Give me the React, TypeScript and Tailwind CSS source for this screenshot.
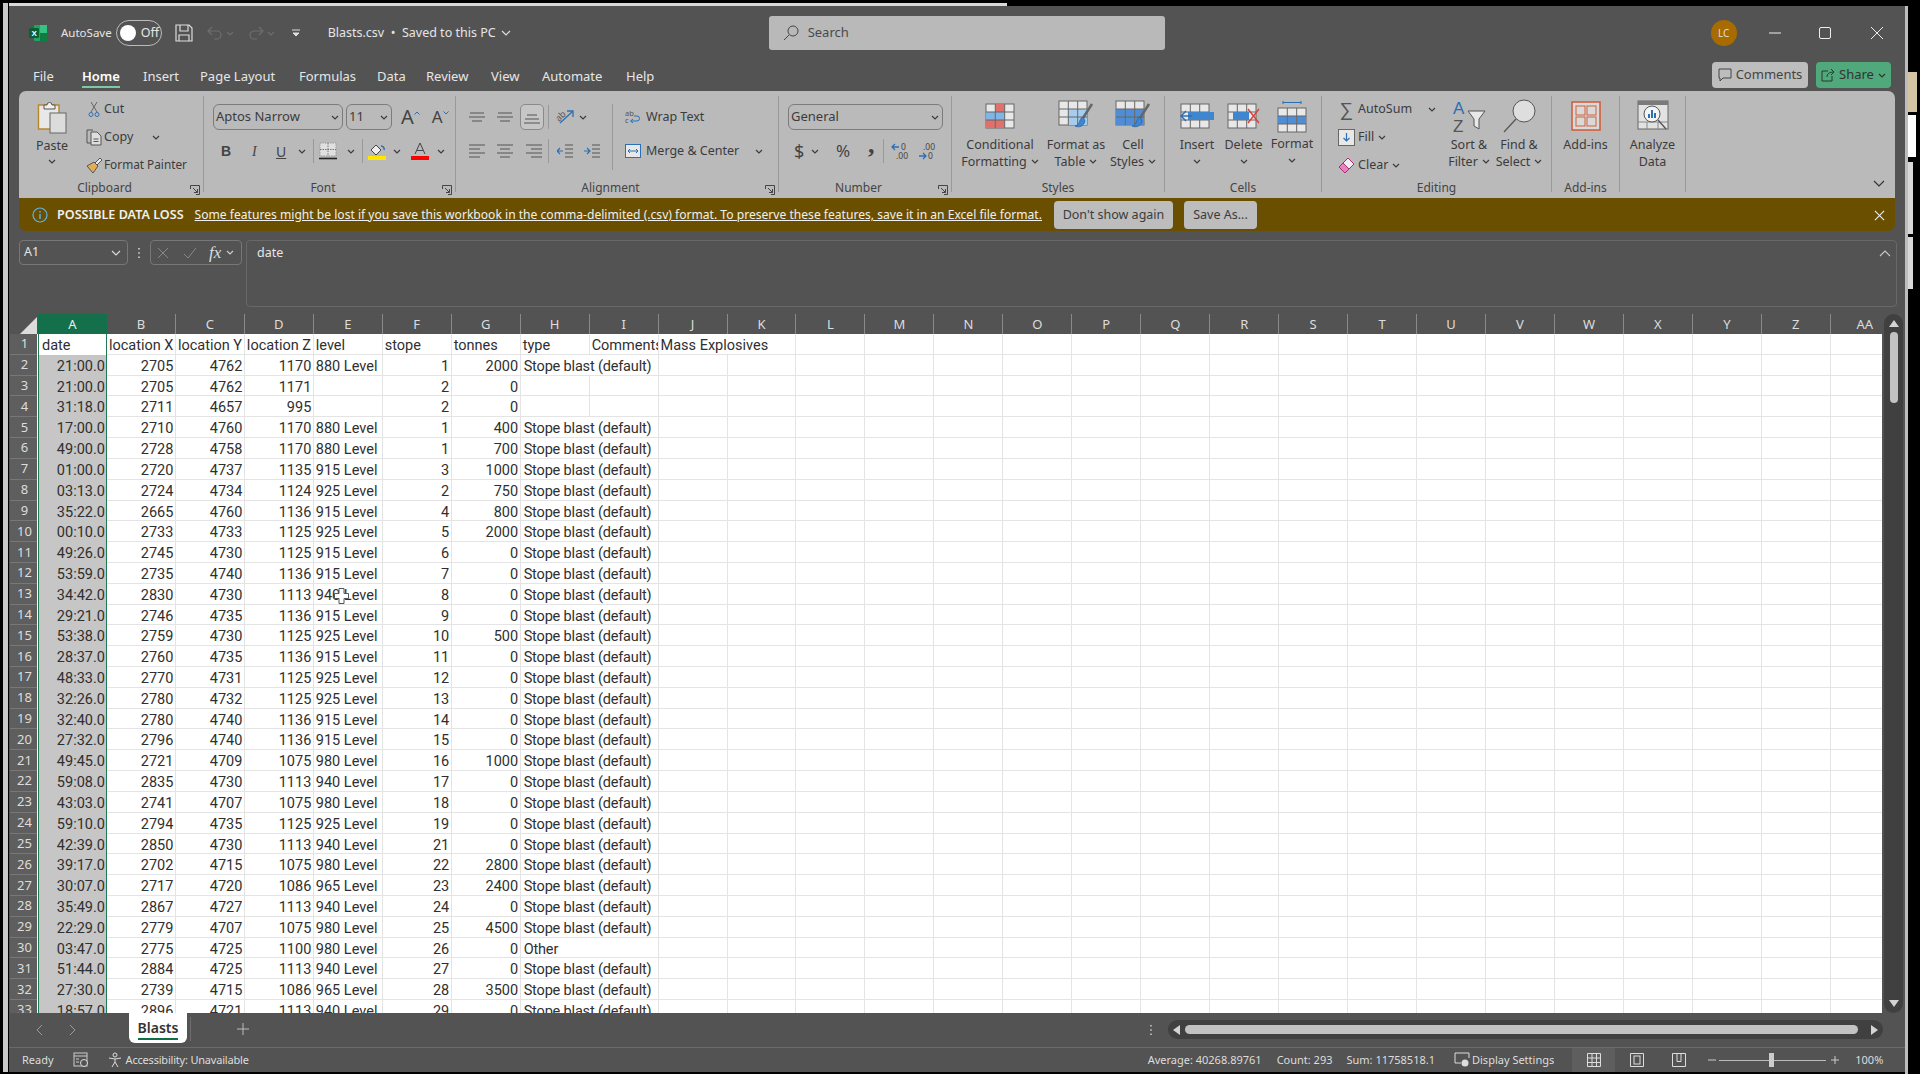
import React from 'react';

const rows: (string | number)[][] = [
  ['21:00.0', 2705, 4762, 1170, '880 Level', 1, 2000, 'Stope blast (default)'],
  ['21:00.0', 2705, 4762, 1171, '', 2, 0, ''],
  ['31:18.0', 2711, 4657, 995, '', 2, 0, ''],
  ['17:00.0', 2710, 4760, 1170, '880 Level', 1, 400, 'Stope blast (default)'],
  ['49:00.0', 2728, 4758, 1170, '880 Level', 1, 700, 'Stope blast (default)'],
  ['01:00.0', 2720, 4737, 1135, '915 Level', 3, 1000, 'Stope blast (default)'],
  ['03:13.0', 2724, 4734, 1124, '925 Level', 2, 750, 'Stope blast (default)'],
  ['35:22.0', 2665, 4760, 1136, '915 Level', 4, 800, 'Stope blast (default)'],
  ['00:10.0', 2733, 4733, 1125, '925 Level', 5, 2000, 'Stope blast (default)'],
  ['49:26.0', 2745, 4730, 1125, '915 Level', 6, 0, 'Stope blast (default)'],
  ['53:59.0', 2735, 4740, 1136, '915 Level', 7, 0, 'Stope blast (default)'],
  ['34:42.0', 2830, 4730, 1113, '940 Level', 8, 0, 'Stope blast (default)'],
  ['29:21.0', 2746, 4735, 1136, '915 Level', 9, 0, 'Stope blast (default)'],
  ['53:38.0', 2759, 4730, 1125, '925 Level', 10, 500, 'Stope blast (default)'],
  ['28:37.0', 2760, 4735, 1136, '915 Level', 11, 0, 'Stope blast (default)'],
  ['48:33.0', 2770, 4731, 1125, '925 Level', 12, 0, 'Stope blast (default)'],
  ['32:26.0', 2780, 4732, 1125, '925 Level', 13, 0, 'Stope blast (default)'],
  ['32:40.0', 2780, 4740, 1136, '915 Level', 14, 0, 'Stope blast (default)'],
  ['27:32.0', 2796, 4740, 1136, '915 Level', 15, 0, 'Stope blast (default)'],
  ['49:45.0', 2721, 4709, 1075, '980 Level', 16, 1000, 'Stope blast (default)'],
  ['59:08.0', 2835, 4730, 1113, '940 Level', 17, 0, 'Stope blast (default)'],
  ['43:03.0', 2741, 4707, 1075, '980 Level', 18, 0, 'Stope blast (default)'],
  ['59:10.0', 2794, 4735, 1125, '925 Level', 19, 0, 'Stope blast (default)'],
  ['42:39.0', 2850, 4730, 1113, '940 Level', 21, 0, 'Stope blast (default)'],
  ['39:17.0', 2702, 4715, 1075, '980 Level', 22, 2800, 'Stope blast (default)'],
  ['30:07.0', 2717, 4720, 1086, '965 Level', 23, 2400, 'Stope blast (default)'],
  ['35:49.0', 2867, 4727, 1113, '940 Level', 24, 0, 'Stope blast (default)'],
  ['22:29.0', 2779, 4707, 1075, '980 Level', 25, 4500, 'Stope blast (default)'],
  ['03:47.0', 2775, 4725, 1100, '980 Level', 26, 0, 'Other'],
  ['51:44.0', 2884, 4725, 1113, '940 Level', 27, 0, 'Stope blast (default)'],
  ['27:30.0', 2739, 4715, 1086, '965 Level', 28, 3500, 'Stope blast (default)'],
  ['18:57.0', 2896, 4721, 1113, '940 Level', 29, 0, 'Stope blast (default)'],
];

const headers = ['date', 'location X', 'location Y', 'location Z', 'level', 'stope', 'tonnes', 'type', 'Comments', 'Mass Explosives'];
const cols = 'ABCDEFGHIJKLMNOPQRSTUVWXYZ'.split('').concat('AA');

const tabs: [string, string][] = [
  ['File', 'w-[49px]'], ['Home', 'w-[61px]'], ['Insert', 'w-[57px]'], ['Page Layout', 'w-[99px]'], ['Formulas', 'w-[78px]'],
  ['Data', 'w-[49px]'], ['Review', 'w-[65px]'], ['View', 'w-[51px]'], ['Automate', 'w-[84px]'], ['Help', 'w-[40px]'],
];

const Chev = ({ color = '#3c3c3c' }: { color?: string }) => (
  <svg viewBox="0 0 8 5" className="w-2 h-[5px] shrink-0">
    <path d="M1 1l3 3 3-3" fill="none" stroke={color} strokeWidth="1.2" />
  </svg>
);

const Launcher = () => (
  <svg viewBox="0 0 10 10" className="w-[10px] h-[10px] shrink-0">
    <path d="M.5 4V.5H9.500V9.500H6M3 3l4.500 4.500M7.500 4v3.500H4" fill="none" stroke="#444" strokeWidth="1" />
  </svg>
);

// ribbon group: content on top, caption at the bottom, thin divider to the right
const Group = ({ w, label, launcher, children }: { w: string; label: string; launcher?: boolean; children: React.ReactNode }) => (
  <>
    <div className={`${w} h-full flex flex-col shrink-0`}>
      <div className="flex-1 min-h-0 flex flex-col">{children}</div>
      <div className="h-[20px] flex items-center text-[12px] text-[#444]">
        <span className="flex-1 text-center">{label}</span>
        {launcher && <span className="mr-[3px] -mb-1"><Launcher /></span>}
      </div>
    </div>
    <div className="w-px h-[96px] mt-[5px] bg-[#999] shrink-0" />
  </>
);

const Big = ({ w, icon, lines, chev = 'below', shift = '' }: { w: string; icon: React.ReactNode; lines: string[]; chev?: 'below' | 'inline' | 'none'; shift?: string }) => (
  <div className={`${w} shrink-0 flex flex-col items-center pt-[9px] text-[12.500px] leading-[17px] text-[#3c3c3c]`}>
    <div className="h-[32px] flex items-center justify-center mb-[4px]">{icon}</div>
    <div className={shift}>
      {lines.map((l, i) => (
        <div key={l} className="flex items-center justify-center gap-[4px] whitespace-nowrap">
          {l}
          {chev === 'inline' && i === lines.length - 1 && <Chev />}
        </div>
      ))}
    </div>
    {chev === 'below' && <div className="mt-[6px]"><Chev /></div>}
  </div>
);

const Sel = ({ w, text, size = 'text-[13px]' }: { w: string; text: string; size?: string }) => (
  <div className={`${w} h-[26px] rounded-[6px] border border-[#7c7c7c] flex items-center justify-between pl-[2px] pr-[3px] ${size} text-[#3c3c3c]`}>
    {text}
    <Chev />
  </div>
);

const Lines = ({ kind }: { kind: 'top' | 'mid' | 'bot' | 'left' | 'center' | 'right' }) => {
  const d = {
    top: 'M0 1h16M1 5h14M3 9h10',
    mid: 'M1 3h14M0 7h16M3 11h10',
    bot: 'M3 5h10M1 9h14M0 13h16',
    left: 'M0 1h16M0 5h11M0 9h16M0 13h11',
    center: 'M0 1h16M3 5h10M0 9h16M3 13h10',
    right: 'M0 1h16M5 5h11M0 9h16M5 13h11',
  }[kind];
  return (
    <svg viewBox="0 0 16 14" className="w-4 h-[14px] shrink-0">
      <path d={d} stroke="#555" strokeWidth="1.100" fill="none" />
    </svg>
  );
};

const CellGrid = ({ fills }: { fills?: [number, number, string][] }) => (
  <>
    <rect x="1" y="1" width="28" height="24" fill="#e8e8e8" stroke="#666" />
    {(fills || []).map(([c, r, f]) => (
      <rect key={`${c}${r}`} x={1 + c * 9.330} y={1 + r * 8} width="9.330" height="8" fill={f} />
    ))}
    <path d="M10.300 1v24M19.700 1v24M1 9h28M1 17h28" stroke="#666" />
  </>
);

const Brush = () => (
  <g>
    <path d="M34 4L25 18" stroke="#666" strokeWidth="2.500" />
    <path d="M25 17c-3 1-3 4-4 6-1 2-3 3-4 3 4 2 9 0 10-5z" fill="#3f86cf" stroke="#255c94" strokeWidth=".7" />
  </g>
);

const Small = ({ icon, text, chev, size = 'text-[12.500px]', iconW = 'w-[21px]' }: { icon: React.ReactNode; text: string; chev?: boolean; size?: string; iconW?: string }) => (
  <div className={`h-[28px] flex items-center ${size} text-[#3c3c3c] whitespace-nowrap`}>
    <span className={`${iconW} flex justify-center shrink-0`}>{icon}</span>
    <span className="ml-[1px]">{text}</span>
    {chev && <span className="ml-[4px]"><Chev /></span>}
  </div>
);

// font size grow / shrink buttons: a letter with a small blue caret
const SizeBtn = ({ big }: { big?: boolean }) => (
  <span className={big ? 'ml-[6px] flex items-start text-[20px] leading-[26px] text-[#444]' : 'ml-[9px] flex items-start text-[17px] leading-[26px] text-[#444]'}>
    A
    <svg viewBox="0 0 6 4" className="w-[6px] h-1 mt-[7px]"><path d={big ? 'M.5 3.500L3 1l2.500 2.500' : 'M.5.500L3 3 5.500.5'} stroke="#2b6fb5" fill="none" /></svg>
  </span>
);

const Ribbon = () => (
  <div className="mx-[10px] w-[1876px] h-[107px] bg-[#bababa] rounded-t-[7px] flex">
    <Group w="w-[184px]" label="Clipboard" launcher>
      <div className="flex">
        <div className="w-[66px] flex flex-col items-center pt-[9px] text-[12.500px] text-[#3c3c3c]">
          <svg viewBox="0 0 30 34" className="w-[30px] h-[34px]">
            <path d="M1.500 5H22v24H1.500z" fill="#e8e8e8" stroke="#b8862a" strokeWidth="1.400" />
            <path d="M7 5h3a2.500 2.500 0 015 0h3v4H7z" fill="#f0f0f0" stroke="#555" />
            <rect x="13" y="13" width="16" height="20" fill="#dcdcdc" stroke="#666" />
          </svg>
          <span className="leading-[17px] mt-[3px]">Paste</span>
          <span className="mt-[5px]"><Chev /></span>
        </div>
        <div className="flex flex-col pt-[4px]">
          <Small text="Cut" iconW="w-[18px]" icon={
            <svg viewBox="0 0 12 17" className="w-3 h-[17px]"><path d="M3 11L9 1M9 11L3 1" stroke="#666" fill="none" /><circle cx="3" cy="13.500" r="2" fill="none" stroke="#2b6fb5" /><circle cx="9" cy="13.500" r="2" fill="none" stroke="#2b6fb5" /></svg>
          } />
          <div className="flex items-center">
            <Small text="Copy" iconW="w-[18px]" icon={
              <svg viewBox="0 0 16 17" className="w-4 h-[17px]"><path d="M5 14H1V1h6" fill="none" stroke="#555" /><path d="M5 3h6l4 4v9H5z" fill="#dedede" stroke="#555" /><path d="M7.500 10h5M7.500 12.500h5" stroke="#555" /></svg>
            } />
            <span className="ml-[19px]"><Chev /></span>
          </div>
          <Small text="Format Painter" size="text-[11.800px]" iconW="w-[18px]" icon={
            <svg viewBox="0 0 18 17" className="w-[18px] h-[17px]"><path d="M10 6l5-5 2 2-5 5z" fill="#e8e8e8" stroke="#555" /><path d="M2 9l7-4 4 4-5 7z" fill="#e2ad55" stroke="#555" /></svg>
          } />
        </div>
      </div>
    </Group>

    <Group w="w-[251px]" label="Font" launcher>
      <div className="flex items-center pt-[13px] pl-[9px] gap-[3px]">
        <Sel w="w-[130px]" text="Aptos Narrow" />
        <Sel w="w-[46px]" text="11" />
        <SizeBtn big />
        <SizeBtn />
      </div>
      <div className="flex items-center h-[30px] mt-[6px] text-[14px] text-[#444]">
        <span className="ml-[17px] w-[11px] font-bold font-['Liberation_Sans',sans-serif]">B</span>
        <span className="ml-[20px] w-[9px] italic font-['Liberation_Serif',serif]">I</span>
        <span className="ml-[15px] w-[13px] underline">U</span>
        <span className="ml-[9px]"><Chev /></span>
        <span className="ml-[7px] w-px h-[24px] bg-[#999]" />
        <svg viewBox="0 0 18 18" className="ml-[5px] w-[18px] h-[18px]"><path d="M1 1h16v13H1z" fill="#e0e0e0" stroke="#999" strokeDasharray="1.500 1" /><path d="M9 1v13M1 7.500h16" stroke="#777" strokeDasharray="1.500 1" /><path d="M0 16.500h18" stroke="#222" strokeWidth="1.600" /></svg>
        <span className="ml-[10px]"><Chev /></span>
        <span className="ml-[7px] w-px h-[24px] bg-[#999]" />
        <svg viewBox="0 0 18 18" className="ml-[5px] w-[18px] h-[18px]"><path d="M3 8l5-5 5 5-5 5z" fill="#eee" stroke="#444" /><path d="M13 4a3 3 0 013 4" stroke="#2b6fb5" fill="none" strokeWidth="1.500" /><rect y="14" width="18" height="4" fill="#ffe600" /></svg>
        <span className="ml-[7px]"><Chev /></span>
        <svg viewBox="0 0 18 18" className="ml-[10px] w-[18px] h-[18px]"><path d="M4 12L9 1l5 11M6 8.500h6" stroke="#444" fill="none" /><rect y="14" width="18" height="4" fill="#ff0000" /></svg>
        <span className="ml-[8px]"><Chev /></span>
      </div>
    </Group>

    <Group w="w-[322px]" label="Alignment" launcher>
      <div className="flex">
        <div className="w-[156px] pl-[13px] pt-[13px]">
          <div className="flex items-center h-[26px]">
            <Lines kind="mid" />
            <span className="ml-[12px]"><Lines kind="mid" /></span>
            <span className="ml-[7px] w-[24px] h-[26px] rounded-[5px] border border-[#8a8a8a] bg-[#c6c6c6] flex items-center justify-center"><Lines kind="bot" /></span>
            <span className="ml-[4px] w-px h-[24px] bg-[#999]" />
            <svg viewBox="0 0 20 18" className="ml-[6px] w-5 h-[18px]"><text x="1" y="11" fontSize="9" fill="#555" fontFamily="Noto Sans" transform="rotate(-45 6 9)">ab</text><path d="M5 15L17 4M12 3h6v6" stroke="#2b6fb5" fill="none" strokeWidth="1.300" /></svg>
            <span className="ml-[4px]"><Chev /></span>
          </div>
          <div className="flex items-center h-[30px] mt-[6px]">
            <Lines kind="left" />
            <span className="ml-[12px]"><Lines kind="center" /></span>
            <span className="ml-[13px]"><Lines kind="right" /></span>
            <span className="ml-[6px] w-px h-[24px] bg-[#999]" />
            <svg viewBox="0 0 16 14" className="ml-[8px] w-4 h-[14px]"><path d="M8 1h8M8 5h8M8 9h8M8 13h8" stroke="#555" /><path d="M6 7H0M3 4L0 7l3 3" stroke="#2b6fb5" fill="none" strokeWidth="1.200" /></svg>
            <svg viewBox="0 0 16 14" className="ml-[11px] w-4 h-[14px]"><path d="M8 1h8M8 5h8M8 9h8M8 13h8" stroke="#555" /><path d="M0 7h6M3 4l3 3-3 3" stroke="#2b6fb5" fill="none" strokeWidth="1.200" /></svg>
          </div>
        </div>
        <div className="w-px h-[66px] mt-[13px] bg-[#999]" />
        <div className="flex flex-col pl-[12px] pt-[12px] text-[12.500px] text-[#3c3c3c] whitespace-nowrap">
          <div className="flex items-center h-[28px] gap-[5px]">
            <svg viewBox="0 0 16 14" className="w-4 h-[14px]"><text x="0" y="6" fontSize="7.500" fill="#555" fontFamily="Noto Sans">ab</text><text x="0" y="13" fontSize="7.500" fill="#555" fontFamily="Noto Sans">c</text><path d="M9 6h3a2.500 2.500 0 010 5H6M8 9l-2.500 2L8 13" stroke="#2b6fb5" fill="none" /></svg>
            Wrap Text
          </div>
          <div className="flex items-center h-[28px] mt-[6px] gap-[5px]">
            <svg viewBox="0 0 16 14" className="w-4 h-[14px]"><rect x=".5" y=".5" width="15" height="13" fill="#e8e8e8" stroke="#2b6fb5" /><path d="M3 7h10M5 5L3 7l2 2M11 5l2 2-2 2" stroke="#2b6fb5" fill="none" /></svg>
            Merge &amp; Center
            <span className="ml-[11px]"><Chev /></span>
          </div>
        </div>
      </div>
    </Group>

    <Group w="w-[172px]" label="Number" launcher>
      <div className="pl-[9px] pt-[13px]"><Sel w="w-[155px]" text="General" /></div>
      <div className="flex items-center h-[30px] mt-[6px] text-[#444]">
        <span className="ml-[15px] w-[10px] text-[18px]">$</span>
        <span className="ml-[7px]"><Chev /></span>
        <span className="ml-[17px] w-[18px] text-[17px]">%</span>
        <span className="ml-[14px] w-[8px] -mt-[12px] text-[26px] font-bold leading-[18px] font-['Liberation_Serif',serif]">,</span>
        <span className="ml-[7px] w-px h-[24px] bg-[#999]" />
        <svg viewBox="0 0 18 18" className="ml-[7px] w-[18px] h-[18px]"><path d="M8 5H1M4 2L1 5l3 3" stroke="#2b6fb5" fill="none" strokeWidth="1.300" /><text x="10" y="8" fontSize="8.500" fill="#444" fontFamily="Noto Sans">0</text><text x="5" y="17" fontSize="8.500" fill="#444" fontFamily="Noto Sans">.00</text></svg>
        <svg viewBox="0 0 18 18" className="ml-[9px] w-[18px] h-[18px]"><text x="5" y="8" fontSize="8.500" fill="#444" fontFamily="Noto Sans">.00</text><path d="M1 14h7M5 11l3 3-3 3" stroke="#2b6fb5" fill="none" strokeWidth="1.300" /><text x="10" y="17" fontSize="8.500" fill="#444" fontFamily="Noto Sans">0</text></svg>
      </div>
    </Group>

    <Group w="w-[212px]" label="Styles">
      <div className="flex pl-[2px]">
        <Big w="w-[92px]" lines={['Conditional', 'Formatting']} chev="inline" icon={
          <svg viewBox="0 0 30 26" className="w-[30px] h-[26px]"><CellGrid fills={[[1, 0, '#e0706b'], [0, 1, '#7fb6e6'], [1, 1, '#7fb6e6'], [1, 2, '#e0706b'], [0, 2, '#e0706b']]} /></svg>
        } />
        <Big w="w-[60px]" lines={['Format as', 'Table']} chev="inline" icon={
          <svg viewBox="0 0 36 32" className="w-[36px] h-[32px]"><CellGrid fills={[[1, 1, '#a6cdee'], [2, 1, '#a6cdee'], [1, 2, '#a6cdee'], [2, 2, '#a6cdee']]} /><Brush /></svg>
        } />
        <Big w="w-[54px]" lines={['Cell', 'Styles']} chev="inline" icon={
          <svg viewBox="0 0 36 32" className="w-[36px] h-[32px]"><CellGrid fills={[[0, 1, '#4f8ed6'], [1, 1, '#4f8ed6'], [2, 1, '#4f8ed6'], [0, 2, '#4f8ed6'], [1, 2, '#4f8ed6'], [2, 2, '#4f8ed6']]} /><Brush /></svg>
        } />
      </div>
    </Group>

    <Group w="w-[156px]" label="Cells">
      <div className="flex pl-[9px]">
        <Big w="w-[46px]" lines={['Insert']} icon={
          <svg viewBox="0 0 34 26" className="w-[34px] h-[26px]"><CellGrid /><rect x="8" y="9" width="26" height="8" fill="#3f86cf" /><path d="M12 13H1M6 8l-5 5 5 5" stroke="#2b6fb5" fill="none" strokeWidth="1.500" /></svg>
        } />
        <Big w="w-[47px]" lines={['Delete']} icon={
          <svg viewBox="0 0 34 26" className="w-[34px] h-[26px]"><CellGrid /><rect x="6" y="9" width="16" height="8" fill="#3f86cf" /><path d="M21 6l11 14M32 6L21 20" stroke="#d8413a" strokeWidth="1.400" /></svg>
        } />
        <Big w="w-[50px]" lines={['Format']} shift="-mt-px" icon={
          <svg viewBox="0 0 30 32" className="w-[30px] h-[32px] mt-[1px]"><path d="M6 1.500h18M6 0v3M24 0v3" stroke="#2b6fb5" /><g transform="translate(0 6)"><CellGrid fills={[[0, 1, '#4f8ed6'], [1, 1, '#4f8ed6'], [2, 1, '#4f8ed6']]} /></g></svg>
        } />
      </div>
    </Group>

    <Group w="w-[229px]" label="Editing">
      <div className="flex pl-[14px]">
        <div className="w-[108px] flex flex-col pt-[4px]">
          <div className="flex items-center">
            <Small text="AutoSum" icon={<span className="text-[19px] leading-none text-[#555]">∑</span>} />
            <span className="ml-[16px]"><Chev /></span>
          </div>
          <Small text="Fill" chev icon={
            <svg viewBox="0 0 17 17" className="w-[17px] h-[17px]"><rect x=".5" y=".5" width="16" height="16" fill="#e8e8e8" stroke="#666" /><path d="M8.500 4v8M5.500 9l3 3 3-3" stroke="#2b6fb5" fill="none" strokeWidth="1.200" /></svg>
          } />
          <Small text="Clear" chev icon={
            <svg viewBox="0 0 17 17" className="w-[17px] h-[17px]"><path d="M10 1l6 6-9 9-6-6z" fill="#eee" stroke="#b02a7c" /><path d="M1 10l4-4 6 6-4 4z" fill="#e684bd" stroke="#b02a7c" /></svg>
          } />
        </div>
        <Big w="w-[50px]" lines={['Sort &', 'Filter']} chev="inline" icon={
          <svg viewBox="0 0 34 34" className="w-[34px] h-[34px]"><text x="1" y="15" fontSize="17" fill="#2b6fb5" fontFamily="Liberation Sans">A</text><text x="1" y="33" fontSize="17" fill="#555" fontFamily="Liberation Sans">Z</text><path d="M16 12h17l-6 8v10l-5-3v-7z" fill="#e8e8e8" stroke="#555" /></svg>
        } />
        <Big w="w-[50px]" lines={['Find &', 'Select']} chev="inline" icon={
          <svg viewBox="0 0 34 36" className="w-[34px] h-[36px]"><circle cx="22" cy="13" r="11" fill="#dedede" stroke="#555" /><path d="M14 21L2 34" stroke="#555" strokeWidth="1.200" /></svg>
        } />
      </div>
    </Group>

    <Group w="w-[67px]" label="Add-ins">
      <Big w="w-full" lines={['Add-ins']} chev="none" icon={
        <svg viewBox="0 0 30 30" className="w-[30px] h-[30px]"><rect x="1" y="1" width="28" height="28" fill="#d9d9d9" stroke="#d0603c" strokeWidth="1.600" /><rect x="5" y="5" width="9" height="9" fill="none" stroke="#d0603c" /><rect x="16" y="5" width="9" height="9" fill="none" stroke="#d0603c" /><rect x="5" y="16" width="9" height="9" fill="none" stroke="#d0603c" /><rect x="16" y="16" width="9" height="9" fill="none" stroke="#d0603c" /></svg>
      } />
    </Group>

    <Group w="w-[65px]" label="">
      <Big w="w-full" lines={['Analyze', 'Data']} chev="none" icon={
        <svg viewBox="0 0 32 32" className="w-[32px] h-[32px]"><rect x="1" y="1" width="30" height="28" fill="#e2e2e2" stroke="#666" /><rect x="1" y="1" width="30" height="4" fill="#7a7a7a" /><path d="M1 22h30M10 22v7M21 22v7" stroke="#888" /><circle cx="15" cy="14" r="8" fill="#f4f4f4" stroke="#555" /><path d="M11 18v-4h2v4zM14 18v-8h2v8zM17 18v-5h2v5z" fill="#2b6fb5" /><path d="M21 20l8 9" stroke="#555" strokeWidth="1.400" /></svg>
      } />
    </Group>

    <div className="flex-1 flex justify-end items-end pb-[11px] pr-[10px]">
      <svg viewBox="0 0 12 7" className="w-3 h-[7px]"><path d="M1 1l5 5 5-5" stroke="#333" fill="none" strokeWidth="1.200" /></svg>
    </div>
  </div>
);

export default function App() {
  return (
    <div className="w-[1920px] h-[1074px] bg-black flex overflow-hidden font-['Noto_Sans',sans-serif]">
      {/* desktop peeking out on the left */}
      <div className="w-[9px] pl-[3px] pr-[1px] pt-[3px] pb-[2px] shrink-0"><div className="h-full bg-[#c9c9c9]" /></div>

      <div className="w-[1896px] shrink-0 flex flex-col">
        <div className="h-[3px] mt-[3px] w-[998px] bg-[#d8d8d8] shrink-0" />
        <div className="h-[1066px] bg-[#535353] flex flex-col text-[#e6e6e6]">
          {/* title bar */}
          <div className="h-[54px] flex items-center shrink-0 text-[12.500px]">
            <svg viewBox="0 0 18 18" className="ml-[20px] w-[18px] h-[18px]">
              <rect x="5" y="1" width="13" height="16" rx="1" fill="#21a366" />
              <rect x="11" y="1" width="7" height="8" fill="#33c481" />
              <rect x="11" y="9" width="7" height="8" fill="#107c41" />
              <rect x="0" y="4" width="10" height="10" rx="1" fill="#0b5f33" />
              <text x="2.500" y="12" fontSize="8" fill="#fff" fontFamily="Liberation Sans" fontWeight="bold">X</text>
            </svg>
            <span className="ml-[14px] text-[11.500px]">AutoSave</span>
            <span className="ml-[4px] w-[46px] h-[26px] rounded-full border border-[#bbb] flex items-center pl-[3px]">
              <span className="w-[16px] h-[16px] rounded-full bg-white" />
              <span className="ml-[5px]">Off</span>
            </span>
            <svg viewBox="0 0 18 18" className="ml-[13px] w-[18px] h-[18px]"><path d="M1 1h13l3 3v13H1zM5 1v6h8V1M4 17v-6h10v6" fill="none" stroke="#ddd" strokeWidth="1.200" /></svg>
            <svg viewBox="0 0 16 16" className="ml-[14px] w-4 h-4"><path d="M2 6h8a4 4 0 010 8H7M5 2L1 6l4 4" stroke="#6e6e6e" fill="none" strokeWidth="1.200" /></svg>
            <span className="ml-[3px]"><Chev color="#6e6e6e" /></span>
            <svg viewBox="0 0 16 16" className="ml-[14px] w-4 h-4"><path d="M14 6H6a4 4 0 000 8h3M11 2l4 4-4 4" stroke="#6e6e6e" fill="none" strokeWidth="1.200" /></svg>
            <span className="ml-[3px]"><Chev color="#6e6e6e" /></span>
            <svg viewBox="0 0 10 10" className="ml-[16px] w-[10px] h-[10px]"><path d="M1 2h8M2 5l3 3 3-3z" stroke="#ddd" fill="#ddd" /></svg>
            <span className="ml-[27px]">Blasts.csv&nbsp; •&nbsp; Saved to this PC</span>
            <span className="ml-[5px]"><svg viewBox="0 0 10 6" className="w-[10px] h-[6px]"><path d="M1 1l4 4 4-4" stroke="#ddd" fill="none" strokeWidth="1.200" /></svg></span>

            <div className="ml-[258px] w-[396px] h-[34px] rounded-[3px] bg-[#b9b9b9] flex items-center text-[#4a4a4a] text-[13px]">
              <svg viewBox="0 0 16 16" className="ml-[14px] w-4 h-4"><circle cx="10" cy="6" r="5" fill="none" stroke="#444" /><path d="M6 10l-5 5" stroke="#444" /></svg>
              <span className="ml-[9px]">Search</span>
            </div>

            <span className="ml-[546px] w-[26px] h-[26px] rounded-full bg-[#a86b00] flex items-center justify-center text-[10px] text-[#ddd]">LC</span>
            <svg viewBox="0 0 12 12" className="ml-[32px] w-3 h-3"><path d="M0 6h12" stroke="#eee" /></svg>
            <svg viewBox="0 0 12 12" className="ml-[38px] w-3 h-3"><rect x=".5" y=".5" width="11" height="11" rx="1.500" fill="none" stroke="#eee" /></svg>
            <svg viewBox="0 0 12 12" className="ml-[40px] w-3 h-3"><path d="M0 0l12 12M12 0L0 12" stroke="#eee" /></svg>
          </div>

          {/* tabs row */}
          <div className="h-[31px] shrink-0 flex text-[13px]">
            <div className="flex pl-[24px] pt-[7px]">
              {tabs.map(([t, w]) => (
                <div key={t} className={w}>
                  <span className={t === 'Home' ? 'inline-block font-semibold text-white border-b-[2px] border-[#7ec8a8] pb-[1px] leading-[18px]' : 'inline-block leading-[18px]'}>{t}</span>
                </div>
              ))}
            </div>
            <div className="flex-1" />
            <div className="flex items-start pt-[2px] gap-[8px] pr-[14px]">
              <div className="w-[96px] h-[26px] rounded-[4px] bg-[#bdbdbd] text-[#444] flex items-center justify-center gap-[4px] text-[13px]">
                <svg viewBox="0 0 14 14" className="w-[14px] h-[14px]"><path d="M1 1h12v9H5l-3 3v-3H1z" fill="none" stroke="#444" /></svg>
                Comments
              </div>
              <div className="w-[75px] h-[26px] rounded-[4px] bg-[#4fa97b] text-[#333] flex items-center justify-center gap-[4px] text-[13px]">
                <svg viewBox="0 0 14 14" className="w-[14px] h-[14px]"><path d="M7 3H1v10h10V8M6 9c0-3 2-5 7-5M10 1l3 3-3 3" fill="none" stroke="#333" /></svg>
                Share
                <Chev color="#333" />
              </div>
            </div>
          </div>

          <Ribbon />

          {/* data loss banner */}
          <div className="mx-[10px] w-[1876px] h-[33px] shrink-0 bg-[#6b4f00] rounded-b-[7px] flex items-center pt-[1px] text-[12.100px] text-[#f0f0f0]">
            <svg viewBox="0 0 16 16" className="ml-[13px] w-4 h-4"><circle cx="8" cy="8" r="7" fill="none" stroke="#5fb4e6" strokeWidth="1.200" /><path d="M8 7v5M8 4v1.500" stroke="#5fb4e6" strokeWidth="1.400" /></svg>
            <span className="ml-[9px] font-semibold text-[12.600px]">POSSIBLE DATA LOSS</span>
            <span className="ml-[11px] underline">Some features might be lost if you save this workbook in the comma-delimited (.csv) format. To preserve these features, save it in an Excel file format.</span>
            <span className="ml-[12px] w-[119px] h-[28px] rounded-[4px] bg-[#bdbdbd] text-[#3c3c3c] flex items-center justify-center text-[12.500px]">Don't show again</span>
            <span className="ml-[11px] w-[73px] h-[28px] rounded-[4px] bg-[#bdbdbd] text-[#3c3c3c] flex items-center justify-center text-[12.500px]">Save As...</span>
            <span className="flex-1" />
            <svg viewBox="0 0 12 12" className="mr-[10px] w-[11px] h-[11px]"><path d="M1 1l10 10M11 1L1 11" stroke="#eee" strokeWidth="1.200" /></svg>
          </div>

          {/* formula bar */}
          <div className="h-[67px] mt-[9px] shrink-0 flex items-start pl-[10px] text-[12.500px]">
            <div className="w-[109px] h-[25px] rounded-[4px] border border-[#777] flex items-center justify-between pl-[4px] pr-[6px]">
              A1
              <svg viewBox="0 0 10 6" className="w-[10px] h-[6px]"><path d="M1 1l4 4 4-4" stroke="#ddd" fill="none" strokeWidth="1.100" /></svg>
            </div>
            <span className="w-[22px] h-[25px] flex items-center justify-center">
              <svg viewBox="0 0 2 12" className="w-[2px] h-3"><path d="M1 1v1.500M1 5.200v1.500M1 9.500v1.500" stroke="#ddd" strokeWidth="1.500" /></svg>
            </span>
            <div className="w-[92px] h-[25px] rounded-[4px] border border-[#777] flex items-center text-[#ddd]">
              <svg viewBox="0 0 12 12" className="ml-[6px] w-3 h-3"><path d="M1 1l10 10M11 1L1 11" stroke="#888" /></svg>
              <svg viewBox="0 0 14 12" className="ml-[14px] w-[14px] h-3"><path d="M1 7l4 4 8-10" stroke="#888" fill="none" /></svg>
              <span className="ml-[12px] italic font-['Liberation_Serif',serif] text-[17px] leading-none">fx</span>
              <span className="ml-[5px]"><Chev color="#ccc" /></span>
            </div>
            <div className="ml-[4px] w-[1651px] h-[67px] rounded-[4px] border border-[#686868] flex justify-between pl-[10px] pr-[5px] pt-[3px]">
              <span>date</span>
              <svg viewBox="0 0 12 7" className="w-3 h-[7px] mt-[6px]"><path d="M1 6l5-5 5 5" stroke="#ccc" fill="none" strokeWidth="1.100" /></svg>
            </div>
          </div>

          {/* sheet + vertical scrollbar */}
          <div className="mt-[7px] h-[699px] shrink-0 flex pl-px relative">
            <div className="w-[1872px] overflow-hidden">
              <div className="grid w-[1891px] grid-cols-[28px_repeat(27,68.960px)] grid-rows-[20px] auto-rows-[20.820px] font-['Roboto',sans-serif] text-[14.500px] leading-[23px] text-[#2f2f2f] bg-white">
                <div className="bg-[#535353] flex justify-end items-end pr-[1px]">
                  <svg viewBox="0 0 16 16" className="w-[17px] h-[17px]"><path d="M16 0v16H0z" fill="#dcdcdc" /></svg>
                </div>
                {cols.map((c, i) => (
                  <div key={c} className={i === 0
                    ? 'bg-[#14704a] text-[#eee] flex items-center justify-center pt-[1px] font-["Noto_Sans",sans-serif] text-[13px]'
                    : 'bg-[#535353] text-[#ddd] flex items-center justify-center pt-[1px] border-r border-[#8a8a8a] font-["Noto_Sans",sans-serif] text-[13px]'}>{c}</div>
                ))}

                <div className="bg-[#5e5e5e] text-[#ddd] flex items-center justify-center pl-[2px] border-b border-[#777] font-['Noto_Sans',sans-serif] text-[13px] mr-px">1</div>
                {cols.map((c, i) => (
                  <div key={c} className={
                    i === 0 ? 'bg-white px-[3px] border-x-[1.500px] border-[#217a55] whitespace-nowrap'
                      : i === 8 ? 'border-r border-b border-[#e4e4e4] pl-[2px] overflow-hidden whitespace-nowrap'
                        : i === 9 ? 'border-b border-[#e4e4e4] pl-[2px] whitespace-nowrap'
                          : 'border-r border-b border-[#e4e4e4] pl-[2px] whitespace-nowrap'
                  }>{headers[i] || ''}</div>
                ))}

                {rows.map((r, ri) => (
                  <React.Fragment key={ri}>
                    <div className="bg-[#5e5e5e] text-[#ddd] flex items-center justify-center pl-[2px] border-b border-[#777] font-['Noto_Sans',sans-serif] text-[13px] mr-px">{ri + 2}</div>
                    {cols.map((c, i) => {
                      const v = r[i];
                      if (i === 0) return <div key={c} className="bg-[#c6c6c6] text-right pr-[1px] border-x-[1.500px] border-[#217a55] whitespace-nowrap">{v}</div>;
                      if (i === 7) return <div key={c} className={v ? 'border-b border-[#e4e4e4] pl-[3px] tracking-[-0.17px] whitespace-nowrap' : 'border-r border-b border-[#e4e4e4] pl-[3px]'}>{v}</div>;
                      if (typeof v === 'number') return <div key={c} className="border-r border-b border-[#e4e4e4] text-right pr-[1.500px] whitespace-nowrap">{v}</div>;
                      return <div key={c} className="border-r border-b border-[#e4e4e4] pl-[2px] whitespace-nowrap">{v}</div>;
                    })}
                  </React.Fragment>
                ))}
              </div>
            </div>
            <div className="ml-[2px] w-[19px] h-[699px] rounded-full bg-[#404040] flex flex-col items-center py-[6px]">
              <svg viewBox="0 0 10 7" className="w-[10px] h-[7px]"><path d="M5 0l5 7H0z" fill="#d4d4d4" /></svg>
              <div className="mt-[5px] w-[8px] h-[71px] rounded-full bg-[#c2c2c2]" />
              <div className="flex-1" />
              <svg viewBox="0 0 10 7" className="w-[10px] h-[7px]"><path d="M5 7L0 0h10z" fill="#d4d4d4" /></svg>
            </div>
            {/* mouse cursor on the sheet */}
            <svg viewBox="0 0 15 16" className="absolute left-[325px] top-[274px] w-[15px] h-[16px]">
              <path d="M5 .5h5v5h4.500v5H10v5H5v-5H.5v-5H5z" fill="#fff" stroke="#555" />
            </svg>
          </div>

          {/* sheet tabs */}
          <div className="h-[34px] shrink-0 flex items-start text-[#ccc]">
            <svg viewBox="0 0 8 12" className="ml-[26px] mt-[11px] w-2 h-3"><path d="M7 1L2 6l5 5" stroke="#9a9a9a" fill="none" /></svg>
            <svg viewBox="0 0 8 12" className="ml-[26px] mt-[11px] w-2 h-3"><path d="M1 1l5 5-5 5" stroke="#9a9a9a" fill="none" /></svg>
            <div className="ml-[52px] w-[58px] h-[30px] bg-white rounded-b-[6px] text-[#333] font-semibold text-[14px] flex flex-col items-center">
              <span className="leading-[20px] mt-[5px]">Blasts</span>
              <span className="w-[40px] h-[2px] bg-[#0e7145]" />
            </div>
            <span className="ml-[3px] mt-[4px] w-px h-[24px] bg-[#6e6e6e]" />
            <svg viewBox="0 0 12 12" className="ml-[46px] mt-[10px] w-3 h-3"><path d="M6 0v12M0 6h12" stroke="#bbb" /></svg>
            <div className="flex-1" />
            <svg viewBox="0 0 2 12" className="mt-[11px] mr-[16px] w-[2px] h-3"><path d="M1 1v1.500M1 5.200v1.500M1 9.500v1.500" stroke="#ccc" strokeWidth="1.500" /></svg>
            <div className="mt-[7px] mr-[22px] w-[715px] h-[19px] rounded-full bg-[#404040] flex items-center px-[5px]">
              <svg viewBox="0 0 7 10" className="w-[7px] h-[10px]"><path d="M0 5l7-5v10z" fill="#d4d4d4" /></svg>
              <div className="ml-[5px] w-[673px] h-[9px] rounded-full bg-[#c2c2c2]" />
              <div className="flex-1" />
              <svg viewBox="0 0 7 10" className="w-[7px] h-[10px]"><path d="M7 5L0 0v10z" fill="#d4d4d4" /></svg>
            </div>
          </div>

          {/* status bar */}
          <div className="h-[25px] shrink-0 border-t border-[#6a6a6a] flex items-center text-[11px] text-[#ddd] whitespace-nowrap">
            <span className="ml-[13px]">Ready</span>
            <svg viewBox="0 0 16 16" className="ml-[19px] w-4 h-4"><rect x="1" y="1" width="13" height="13" fill="none" stroke="#ccc" /><path d="M1 4h13M3 7h3M3 10h3" stroke="#ccc" /><circle cx="11" cy="11" r="3.500" fill="#535353" stroke="#ddd" /></svg>
            <svg viewBox="0 0 16 16" className="ml-[19px] w-4 h-4"><circle cx="7" cy="3" r="2" fill="none" stroke="#ddd" /><path d="M1 6l6 1 6-1M7 7v3l-3 5M7 10l3 5" stroke="#ddd" fill="none" /></svg>
            <span className="ml-[2px] tracking-[-0.2px]">Accessibility: Unavailable</span>
            <span className="ml-[899px]">Average: 40268.89761</span>
            <span className="ml-[15px]">Count: 293</span>
            <span className="ml-[14px]">Sum: 11758518.1</span>
            <svg viewBox="0 0 16 16" className="ml-[19px] w-4 h-4"><path d="M7 11H1V1h14v5" fill="none" stroke="#ddd" /><circle cx="11" cy="11" r="3.500" fill="#ddd" /></svg>
            <span className="ml-[2px]">Display Settings</span>
            <div className="ml-[18px] w-[43px] h-[24px] bg-[#5e5e5e] flex items-center justify-center">
              <svg viewBox="0 0 14 14" className="w-[14px] h-[14px]"><path d="M.5.500h13v13H.5zM.5 5h13M.5 9.500h13M5 .5v13M9.500.5v13" fill="none" stroke="#ddd" /></svg>
            </div>
            <svg viewBox="0 0 14 14" className="ml-[15px] w-[14px] h-[14px]"><path d="M.5.500h13v13H.5z" fill="none" stroke="#ddd" /><rect x="4" y="3" width="6" height="8" fill="none" stroke="#ddd" /></svg>
            <svg viewBox="0 0 14 14" className="ml-[28px] w-[14px] h-[14px]"><path d="M.5.500h13v13H.5zM5 .5v8h4v-8" fill="none" stroke="#ddd" /></svg>
            <svg viewBox="0 0 8 8" className="ml-[22px] w-2 h-2"><path d="M0 4h8" stroke="#ccc" /></svg>
            <div className="ml-[3px] w-[107px] h-[14px] flex items-center relative">
              <div className="w-full h-px bg-[#bbb]" />
              <div className="absolute left-[50px] w-[5px] h-[14px] bg-[#ccc]" />
            </div>
            <svg viewBox="0 0 8 8" className="ml-[5px] w-2 h-2"><path d="M0 4h8M4 0v8" stroke="#ccc" /></svg>
            <span className="ml-[16px]">100%</span>
          </div>
        </div>
      </div>

      {/* other desktop windows behind, on the right */}
      <div className="w-[15px] shrink-0 flex">
        <div className="w-[3px] h-full mt-[6px] bg-[#bdbdbd]" />
        <div className="flex-1 flex flex-col mt-[72px] gap-[3px]">
          <div className="h-[40px] mr-[3px] bg-[#d4c4a4]" />
          <div className="h-[42px] mr-[4px] bg-white" />
          <div className="h-[72px] mt-[2px] mr-[7px] bg-[#d8d8d8]" />
          <div className="h-[52px] mr-[7px] bg-[#d8d8d8]" />
        </div>
      </div>
    </div>
  );
}
